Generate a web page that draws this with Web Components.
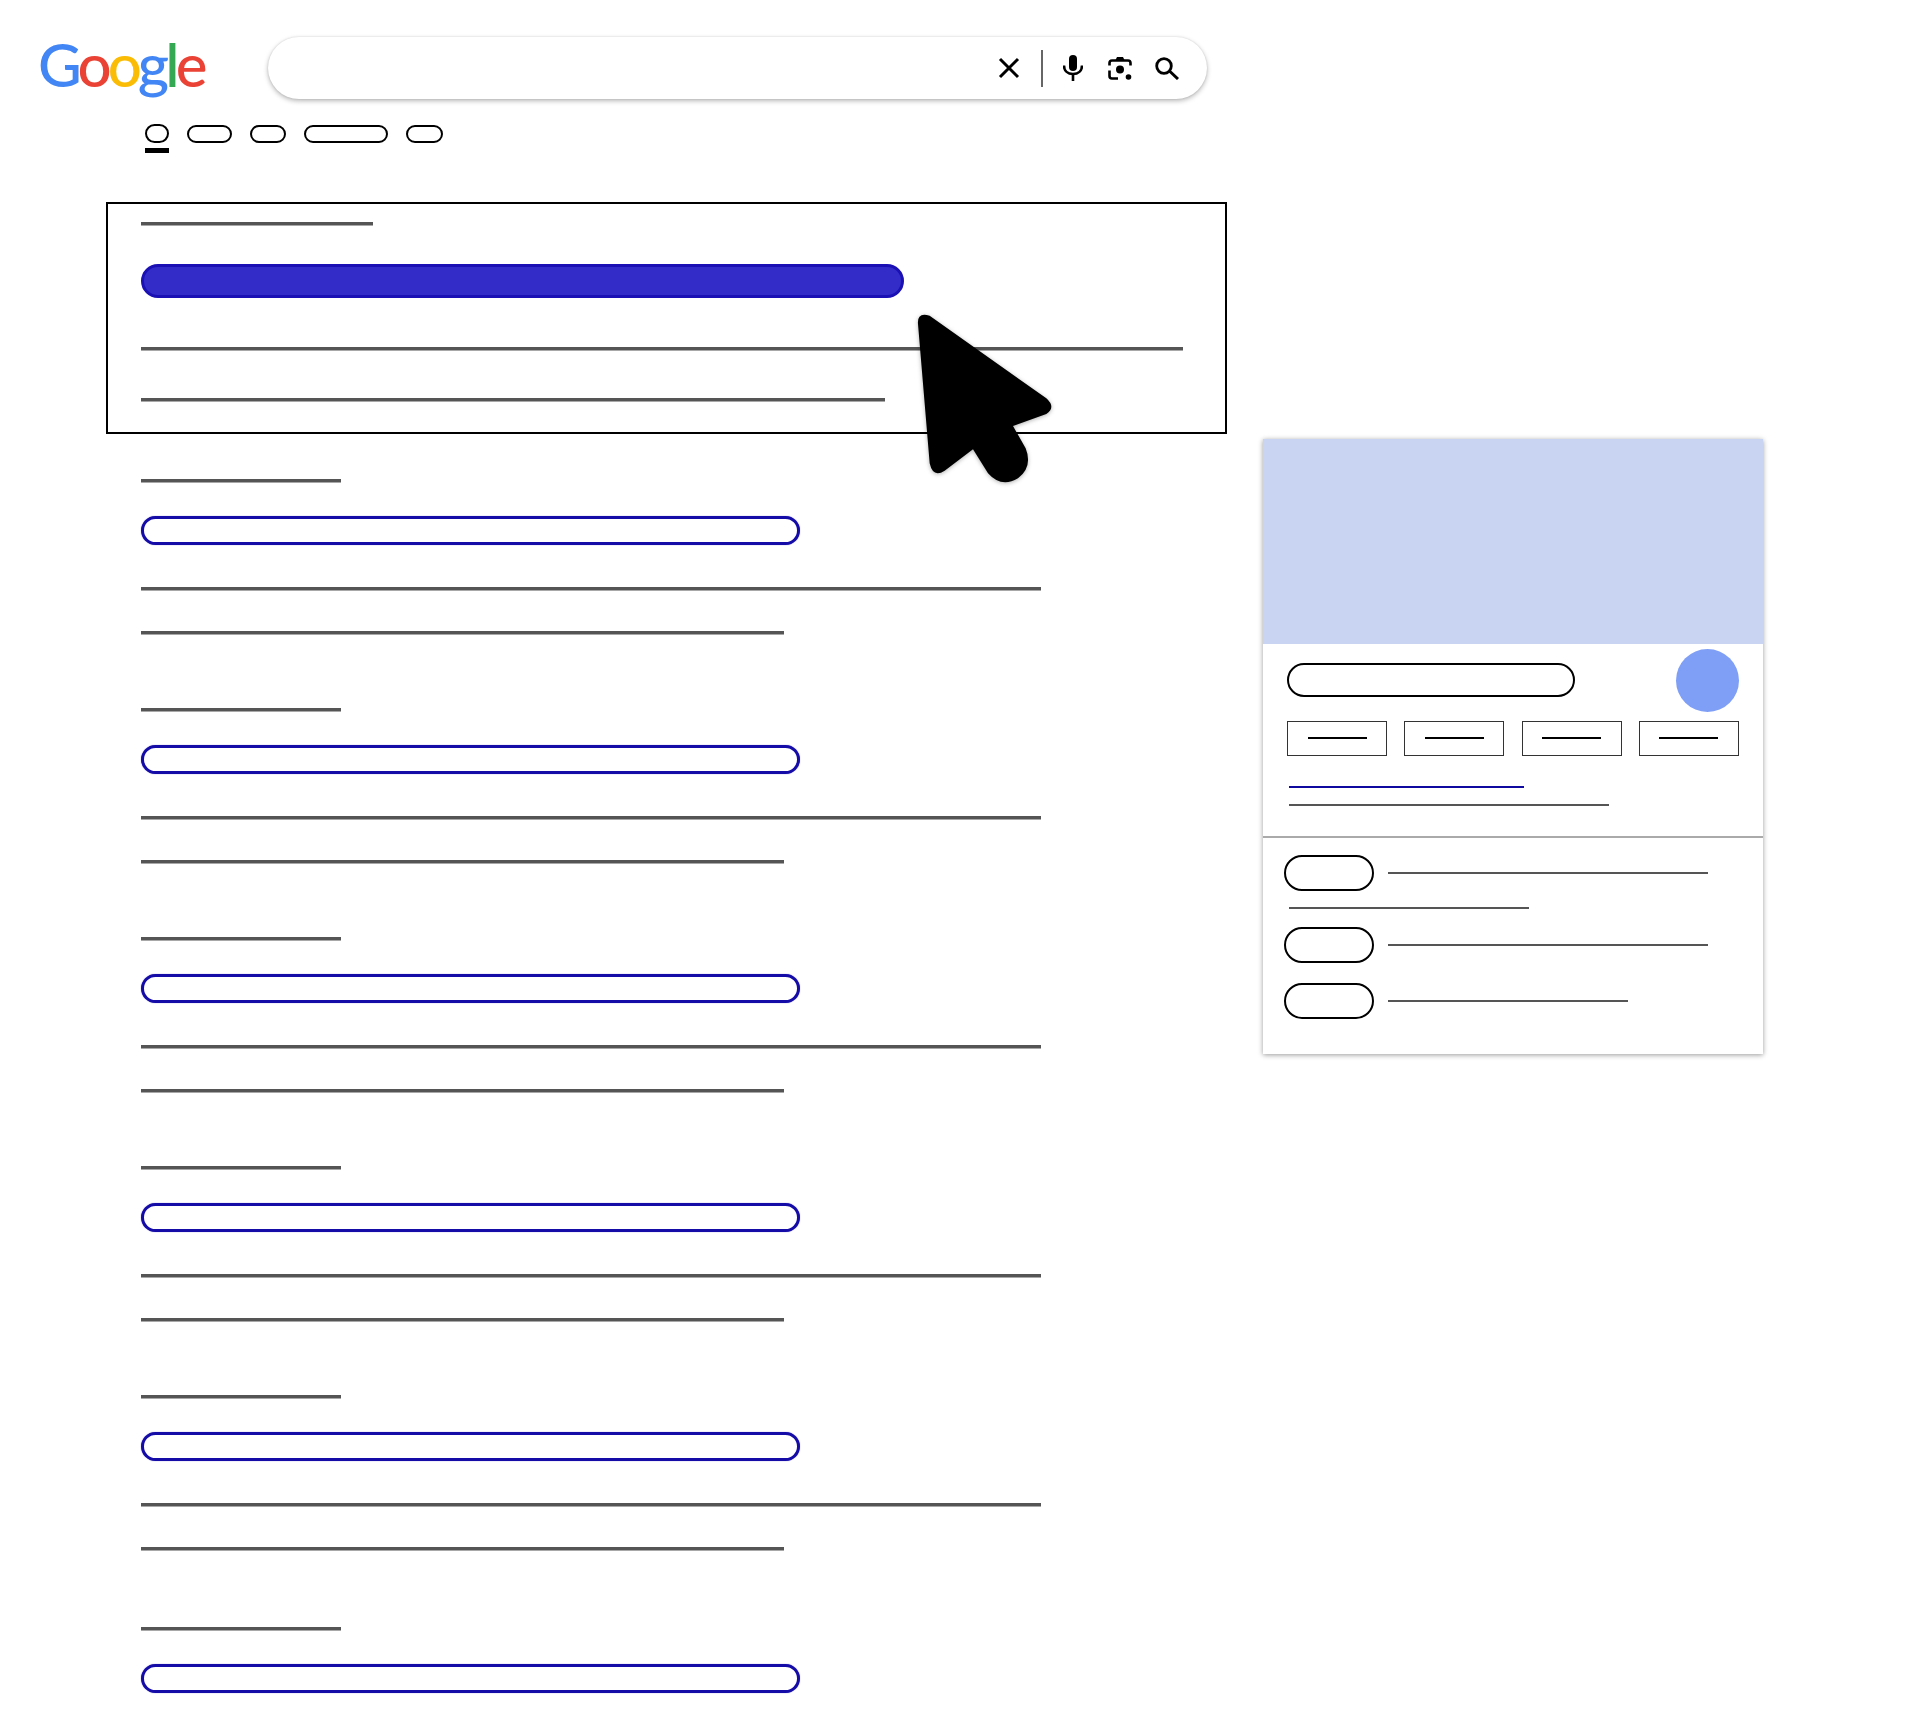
<!doctype html>
<html>
<head>
<meta charset="utf-8">
<title>Search results wireframe</title>
<style>
  html, body { margin: 0; background: #fff; }
  body { height: 1728px; overflow: hidden; position: relative; font-family: "Liberation Sans", sans-serif; }
  .main { display: flex; align-items: flex-start; gap: 36px; padding: 48px 0 0 106px; }
  .results { display: flex; flex-direction: column; width: 1121px; }
  .plain { display: flex; flex-direction: column; gap: 74px; padding: 45px 0 0 35px; }
  .plain result-item[short] { margin-top: 3px; }
</style>
</head>
<body>
<page-header></page-header>
<tab-strip></tab-strip>
<div class="main">
  <div class="results">
    <featured-result></featured-result>
    <div class="plain">
      <result-item></result-item>
      <result-item></result-item>
      <result-item></result-item>
      <result-item></result-item>
      <result-item></result-item>
      <result-item short></result-item>
    </div>
  </div>
  <knowledge-panel></knowledge-panel>
</div>
<mouse-cursor></mouse-cursor>

<script>
const define = (name, html) => {
  customElements.define(name, class extends HTMLElement {
    connectedCallback() {
      if (this.shadowRoot) return
      this.attachShadow({mode: "open"}).innerHTML = html
    }
  })
}

define("google-logo", `
  <style>
    :host { display: block; font-family: Lato, "Open Sans", sans-serif; font-size: 60px; font-weight: 500; line-height: 62px; letter-spacing: -3.9px; white-space: nowrap; }
    .b { color: #4285f4; } .r { color: #ea4335; } .y { color: #fbbc05; } .g { color: #34a853; }
  </style>
  <span class="b">G</span><span class="r">o</span><span class="y">o</span><span class="b">g</span><span class="g">l</span><span class="r">e</span>
`)

define("search-box", `
  <style>
    :host { display: flex; align-items: center; box-sizing: border-box; width: 939px; height: 62px; border-radius: 31px; background: #fff; box-shadow: 0 2px 5px rgba(0,0,0,.28), 0 0 2px rgba(0,0,0,.12); padding-right: 28px; justify-content: flex-end; }
    svg { display: block; fill: #000; }
    .bar { width: 2px; height: 37px; background: #666; margin: 0 20px 0 21px; }
    .mic { margin-right: 25px; }
    .lens { margin-right: 23px; }
  </style>
  <svg width="22" height="22" viewBox="0 0 22 22"><path d="M2 2 L20 20 M20 2 L2 20" stroke="#000" stroke-width="3" fill="none"/></svg>
  <div class="bar"></div>
  <svg class="mic" width="20" height="26" viewBox="0 0 20 26">
    <rect x="6" y="0" width="8" height="16" rx="4"/>
    <path d="M1 10.500 C1 16 5 19 10 19 C15 19 19 16 19 10.500" fill="none" stroke="#000" stroke-width="2.600"/>
    <rect x="8.700" y="18" width="2.600" height="8"/>
  </svg>
  <svg class="lens" width="24" height="25" viewBox="0 0 24 25">
    <path d="M7.500 4 L9 1 H15 L16.500 4" fill="#000"/>
    <path d="M1.500 9.500 V7 Q1.500 4.500 4 4.500 H20 Q22.500 4.500 22.500 7 V9.500 M1.500 14.500 V20 Q1.500 22.500 4 22.500 H10" fill="none" stroke="#000" stroke-width="2.600"/>
    <circle cx="12" cy="13.500" r="4"/>
    <circle cx="20.500" cy="21" r="2.800"/>
  </svg>
  <svg width="24" height="23" viewBox="0 0 24 23">
    <circle cx="9" cy="9" r="7.300" fill="none" stroke="#000" stroke-width="2.800"/>
    <path d="M14.500 14 L23 22" stroke="#000" stroke-width="3" fill="none"/>
  </svg>
`)

define("page-header", `
  <style>
    :host { display: flex; align-items: center; height: 62px; padding: 37px 0 0 38px; }
    google-logo { width: 230px; margin-bottom: 8px; }
  </style>
  <google-logo></google-logo>
  <search-box></search-box>
`)

define("tab-strip", `
  <style>
    :host { display: flex; align-items: flex-start; gap: 18px; padding: 26px 0 0 145px; height: 29px; }
    span { display: block; box-sizing: border-box; height: 18px; border: 2px solid #000; border-radius: 9px; background: #fff; }
    .on { display: flex; flex-direction: column; gap: 5px; width: 24px; margin-top: -1px; }
    .on span { height: 19px; border-radius: 9.500px; }
    .on i { display: block; height: 5px; background: #000; }
  </style>
  <div class="on"><span></span><i></i></div>
  <span style="width:45px"></span>
  <span style="width:36px"></span>
  <span style="width:84px"></span>
  <span style="width:37px"></span>
`)

define("sketch-line", `
  <style>
    :host { display: block; height: 3px; background: var(--line, #555); box-shadow: 0 1px 0 #a8a8a8; }
  </style>
`)

define("result-item", `
  <style>
    :host { display: flex; flex-direction: column; align-items: flex-start; }
    .pill { box-sizing: border-box; width: 659px; height: 29px; margin: 34px 0 42px; border: 3px solid #150ca8; border-radius: 14.500px; background: #fff; box-shadow: 0 0 1px rgba(21,12,168,.6); }
    :host([short]) .pill { margin-bottom: 0; }
    :host([short]) .rest { display: none; }
    .rest { display: flex; flex-direction: column; gap: 41px; }
  </style>
  <sketch-line style="width:200px"></sketch-line>
  <div class="pill"></div>
  <div class="rest">
    <sketch-line style="width:900px"></sketch-line>
    <sketch-line style="width:643px"></sketch-line>
  </div>
`)

define("featured-result", `
  <style>
    :host { display: flex; flex-direction: column; align-items: flex-start; box-sizing: border-box; height: 232px; border: 2px solid #000; padding: 18px 0 0 33px; }
    .pill { box-sizing: border-box; width: 763px; height: 34px; margin: 39px 0 49px; border: 3px solid #1a10b4; border-radius: 17px; background: #332cc9; }
    .gap { margin-top: 48px; }
  </style>
  <sketch-line style="width:232px"></sketch-line>
  <div class="pill"></div>
  <sketch-line style="width:1042px"></sketch-line>
  <sketch-line class="gap" style="width:744px"></sketch-line>
`)

define("knowledge-panel", `
  <style>
    :host { display: block; box-sizing: border-box; width: 500px; height: 615px; margin-top: 237px; background: #fff; box-shadow: 0 1px 5px rgba(0,0,0,.4); }
    .photo { height: 205px; background: #c9d4f3; }
    .top { box-sizing: border-box; height: 194px; padding: 5px 24px 0 24px; border-bottom: 2px solid #aaa; }
    .head { display: flex; align-items: center; justify-content: space-between; height: 63px; }
    .name { box-sizing: border-box; width: 288px; height: 34px; margin-top: -2px; border: 2px solid #000; border-radius: 17px; }
    .dot { width: 63px; height: 63px; border-radius: 50%; background: #7f9ff7; }
    .boxes { display: grid; grid-template-columns: repeat(4, 100px); justify-content: space-between; margin-top: 9px; }
    .boxes div { display: flex; justify-content: center; box-sizing: border-box; height: 35px; padding-top: 15px; border: 1.500px solid #333; }
    .boxes i { display: block; width: 59px; height: 2px; background: #000; }
    .link { height: 2px; width: 235px; margin: 30px 0 0 2px; background: #1009a0; }
    .sub { width: 320px; height: 2px; margin: 16px 0 0 2px; background: #555; }
    .facts { padding: 17px 0 0 21px; }
    .row { display: flex; align-items: center; gap: 14px; height: 36px; }
    .row b { display: block; box-sizing: border-box; width: 90px; height: 36px; border: 2px solid #000; border-radius: 18px; }
    .row u { display: block; height: 2px; background: #555; }
    .wrap { width: 240px; height: 2px; margin: 16px 0 18px 5px; background: #555; }
  </style>
  <div class="photo"></div>
  <div class="top">
    <div class="head"><div class="name"></div><div class="dot"></div></div>
    <div class="boxes">
      <div><i></i></div><div><i></i></div><div><i></i></div><div><i></i></div>
    </div>
    <div class="link"></div>
    <div class="sub"></div>
  </div>
  <div class="facts">
    <div class="row"><b></b><u style="width:320px"></u></div>
    <div class="wrap"></div>
    <div class="row"><b></b><u style="width:320px"></u></div>
    <div class="row" style="margin-top:20px"><b></b><u style="width:240px"></u></div>
  </div>
`)

// sits over the featured result, so this one is placed by hand
define("mouse-cursor", `
  <style>
    :host { position: absolute; left: 913px; top: 310px; width: 124px; height: 177px; }
    svg { display: block; overflow: visible; filter: drop-shadow(0 1px 2px rgba(0,0,0,.3)); }
  </style>
  <svg width="124" height="177" viewBox="100 330 372 531">
    <path d="M115 372 Q112 335 150 347 L500 595 Q530 622 500 642 L400 678 L438 745 Q460 800 415 835 Q365 865 325 820 L280 748 L195 812 Q160 835 150 790 Z" fill="#000"/>
  </svg>
`)
</script>
</body>
</html>
